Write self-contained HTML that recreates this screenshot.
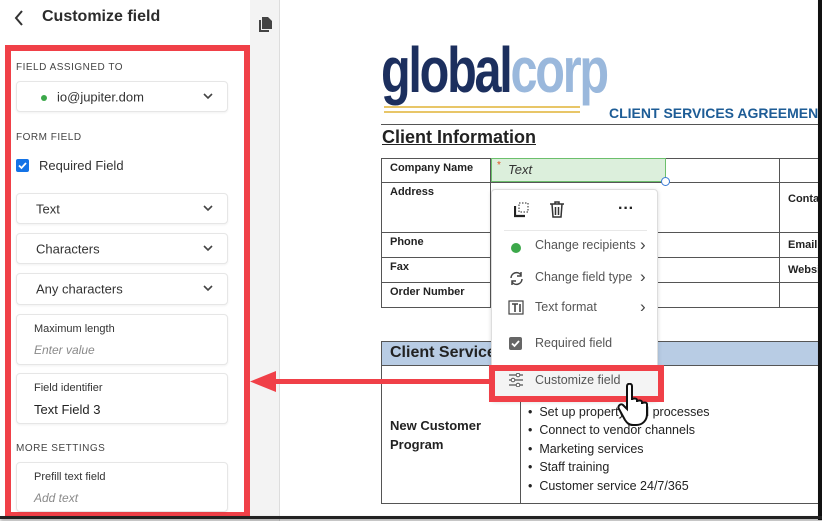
<!DOCTYPE html>
<html><head><meta charset="utf-8"><style>
*{box-sizing:border-box;margin:0;padding:0}
body{width:829px;height:527px;overflow:hidden;background:#fff;font-family:"Liberation Sans",sans-serif;position:relative;color:#2c2c2c}
.a{position:absolute}
.box{position:absolute;left:16px;width:212px;background:#fff;border:1px solid #e6e6e6;border-radius:4px;box-shadow:0 1px 2px rgba(0,0,0,.06)}
.lbl{position:absolute;left:16px;font-size:10px;letter-spacing:.5px;color:#444}
.chev{position:absolute;right:14px;top:50%;margin-top:-4px}
.sel{font-size:13px;color:#333;position:absolute;left:19px;top:50%;transform:translateY(-50%)}
.small{font-size:11px;color:#333;position:absolute;left:17px}
.ph{font-size:12px;color:#8a8a8a;font-style:italic;position:absolute;left:17px}
td{border:1.5px solid #555;font-size:11px;font-weight:bold;vertical-align:top;padding:3px 8px;color:#222;overflow:hidden;white-space:nowrap}
table{border-collapse:collapse;position:absolute;table-layout:fixed}
.mi{position:absolute;left:0;width:167px;font-size:12.5px;color:#555}
.mi span{position:absolute;left:43px}
.mi .c{position:absolute;left:148px;top:-3px;font-size:17px;color:#444}
.li{position:absolute;left:528px;font-size:12.5px;color:#222}
</style></head><body>
<div class="a" style="left:250px;top:0;width:30px;height:527px;background:#f3f3f3;border-right:1px solid #ddd"></div>
<svg class="a" style="left:259px;top:17px" width="13" height="15" viewBox="0 0 13 15"><path d="M3 0h6l4 4v8H3z" fill="#444"/><path d="M0 3h2v10h8v2H0z" fill="#444"/></svg>
<svg class="a" style="left:14px;top:10px" width="10" height="16" viewBox="0 0 10 16"><path d="M8 1L2 8l6 7" stroke="#333" stroke-width="2" fill="none"/></svg>
<div class="a" style="left:42px;top:8px;font-size:16px;font-weight:bold;color:#2c2c2c">Customize field</div>
<div class="a" style="left:5px;top:45px;width:245px;height:473px;border:6px solid #f04048"></div>
<div class="lbl" style="top:62px">FIELD ASSIGNED TO</div>
<div class="box" style="top:81px;height:31px"><div class="a" style="left:24px;top:13px;width:6px;height:6px;border-radius:50%;background:#3ca84a"></div><div class="sel" style="left:40px">io@jupiter.dom</div><svg class="chev" width="10" height="7"><path d="M1 1l4 4 4-4" stroke="#444" stroke-width="1.6" fill="none"/></svg></div>
<div class="lbl" style="top:132px">FORM FIELD</div>
<div class="a" style="left:16px;top:159px;width:13px;height:13px;background:#1473e6;border-radius:2px"><svg width="13" height="13"><path d="M3 6.5l2.5 2.5 4.5-5" stroke="#fff" stroke-width="1.8" fill="none"/></svg></div>
<div class="a" style="left:39px;top:158px;font-size:13px;color:#333">Required Field</div>
<div class="box" style="top:193px;height:31px"><div class="sel">Text</div><svg class="chev" width="10" height="7"><path d="M1 1l4 4 4-4" stroke="#444" stroke-width="1.6" fill="none"/></svg></div>
<div class="box" style="top:233px;height:31px"><div class="sel">Characters</div><svg class="chev" width="10" height="7"><path d="M1 1l4 4 4-4" stroke="#444" stroke-width="1.6" fill="none"/></svg></div>
<div class="box" style="top:273px;height:32px"><div class="sel">Any characters</div><svg class="chev" width="10" height="7"><path d="M1 1l4 4 4-4" stroke="#444" stroke-width="1.6" fill="none"/></svg></div>
<div class="box" style="top:314px;height:51px"><div class="small" style="top:8px">Maximum length</div><div class="ph" style="top:28px">Enter value</div></div>
<div class="box" style="top:373px;height:51px"><div class="small" style="top:8px">Field identifier</div><div class="a" style="left:17px;top:28px;font-size:13px;color:#222">Text Field 3</div></div>
<div class="lbl" style="top:443px">MORE SETTINGS</div>
<div class="box" style="top:462px;height:50px"><div class="small" style="top:8px">Prefill text field</div><div class="ph" style="top:28px">Add text</div></div>
<div class="a" style="left:381px;top:38px;font-size:64px;font-weight:bold;letter-spacing:-3px;line-height:64px;transform:scaleX(0.76);transform-origin:0 0;white-space:nowrap"><span style="color:#1c2f5e">global</span><span style="color:#9ab8dc">corp</span></div>
<div class="a" style="left:384px;top:106px;width:196px;height:2px;background:#e8c668"></div>
<div class="a" style="left:384px;top:111px;width:196px;height:2px;background:#e8c668"></div>
<div class="a" style="left:609px;top:105px;font-size:14px;font-weight:bold;color:#1d5c96;white-space:nowrap">CLIENT SERVICES AGREEMENT</div>
<div class="a" style="left:381px;top:124px;width:437px;height:1px;background:#555"></div>
<div class="a" style="left:382px;top:127px;font-size:18px;font-weight:bold;text-decoration:underline;color:#222">Client Information</div>
<table style="left:381px;top:158px;width:460px">
<colgroup><col style="width:109px"><col style="width:289px"><col style="width:62px"></colgroup>
<tr style="height:24px"><td>Company Name</td><td></td><td></td></tr>
<tr style="height:50px"><td>Address</td><td></td><td style="padding-top:10px">Contact</td></tr>
<tr style="height:25px"><td>Phone</td><td></td><td style="padding-top:6px">Email</td></tr>
<tr style="height:25px"><td>Fax</td><td></td><td style="padding-top:6px">Website</td></tr>
<tr style="height:25px"><td>Order Number</td><td></td><td></td></tr>
</table>
<div class="a" style="left:491px;top:158px;width:175px;height:24px;background:#dcefdc;border:1.5px solid #6cbf6c"></div>
<div class="a" style="left:497px;top:160px;font-size:10px;color:#e05020">*</div>
<div class="a" style="left:508px;top:162px;font-size:13px;font-style:italic;color:#333">Text</div>
<div class="a" style="left:661px;top:177px;width:9px;height:9px;border-radius:50%;border:1.5px solid #3a7bd5;background:#fff"></div>
<table style="left:381px;top:341px;width:460px">
<colgroup><col style="width:139px"><col></colgroup>
<tr style="height:24px;background:#b8cce4"><td colspan="2" style="font-size:16px;padding:2px 8px">Client Services</td></tr>
<tr style="height:138px"><td style="vertical-align:middle;font-size:13px;line-height:19px">New Customer<br>Program</td><td></td></tr>
</table>
<div class="li" style="top:405px">• &nbsp;Set up property and processes</div>
<div class="li" style="top:423px">• &nbsp;Connect to vendor channels</div>
<div class="li" style="top:442px">• &nbsp;Marketing services</div>
<div class="li" style="top:460px">• &nbsp;Staff training</div>
<div class="li" style="top:479px">• &nbsp;Customer service 24/7/365</div>
<div class="a" style="left:491px;top:189px;width:167px;height:212px;background:#fff;border:1px solid #ddd;border-radius:4px;box-shadow:0 1px 4px rgba(0,0,0,.15)">
<svg class="a" style="left:22px;top:12px" width="16" height="16"><path d="M1 4v10h10" stroke="#222" stroke-width="2.2" fill="none"/><rect x="5" y="1" width="9" height="9" stroke="#222" stroke-dasharray="1.5 1.5" fill="none"/></svg>
<svg class="a" style="left:57px;top:11px" width="16" height="17"><path d="M1 3h14M6 3V1h4v2M3 3l1 13h8l1-13M6.5 6v8M9.5 6v8" stroke="#333" stroke-width="1.5" fill="none"/></svg>
<div class="a" style="left:126px;top:10px;font-size:16px;font-weight:bold;color:#222">···</div>
<div class="a" style="left:12px;top:40px;width:143px;height:1px;background:#e8e8e8"></div>
<div class="mi" style="top:48px"><div class="a" style="left:19px;top:5px;width:10px;height:10px;border-radius:50%;background:#3ca84a"></div><span>Change recipients</span><div class="c">›</div></div>
<div class="mi" style="top:80px"><svg class="a" style="left:17px;top:1px" width="15" height="15"><path d="M2 7a5.5 5.5 0 0 1 10-3M13 8a5.5 5.5 0 0 1-10 3" stroke="#444" stroke-width="1.5" fill="none"/><path d="M12 1v4H8M3 14v-4h4" stroke="#444" stroke-width="1.5" fill="none"/></svg><span>Change field type</span><div class="c">›</div></div>
<div class="mi" style="top:110px"><svg class="a" style="left:16px;top:0" width="16" height="15"><rect x="1" y="1" width="14" height="13" stroke="#444" stroke-width="1.2" fill="none"/><path d="M4 4h6M7 4v8M12 4v8" stroke="#444" stroke-width="1.6"/></svg><span>Text format</span><div class="c">›</div></div>
<div class="mi" style="top:146px"><div class="a" style="left:17px;top:1px;width:13px;height:13px;background:#666;border-radius:2px"><svg width="13" height="13"><path d="M3 6.5l2.5 2.5 4.5-5" stroke="#fff" stroke-width="1.8" fill="none"/></svg></div><span>Required field</span></div>
<div class="a" style="left:0;top:178px;width:167px;height:32px;background:#f4f4f4"></div>
<div class="mi" style="top:183px"><svg class="a" style="left:16px;top:0" width="16" height="14"><path d="M1 2h14M1 7h14M1 12h14" stroke="#555" stroke-width="1.2"/><circle cx="10" cy="2" r="1.8" fill="#fff" stroke="#555"/><circle cx="5" cy="7" r="1.8" fill="#fff" stroke="#555"/><circle cx="10" cy="12" r="1.8" fill="#fff" stroke="#555"/></svg><span>Customize field</span></div>
</div>
<div class="a" style="left:489px;top:365px;width:175px;height:37px;border:6px solid #f04048"></div>
<div class="a" style="left:270px;top:379px;width:221px;height:5px;background:#f04048"></div>
<svg class="a" style="left:250px;top:371px" width="26" height="21"><path d="M0 10.5L26 0v21z" fill="#f04048"/></svg>
<svg class="a" style="left:617px;top:383px" width="40" height="44" viewBox="0 0 40 44"><path d="M10 3c0-3 5-3 5 0v14c0-2 5-2 5 0v2c0-2 5-2 5 0v2c0-2 5-2 5 0v10c0 6-4 11-11 11h-3c-4 0-6-2-8-5L2 26c-2-3 2-6 4-4l4 4z" fill="#fff" stroke="#111" stroke-width="2"/></svg>
<div class="a" style="left:818px;top:0;width:4px;height:520px;background:#111;box-shadow:2px 0 3px rgba(0,0,0,.4)"></div>
<div class="a" style="left:0;top:516px;width:822px;height:3px;background:#222;box-shadow:0 2px 3px rgba(0,0,0,.4)"></div>
<div class="a" style="left:822px;top:0;width:7px;height:527px;background:#fff"></div>
<div class="a" style="left:0;top:521px;width:829px;height:6px;background:#fff"></div>
</body></html>
